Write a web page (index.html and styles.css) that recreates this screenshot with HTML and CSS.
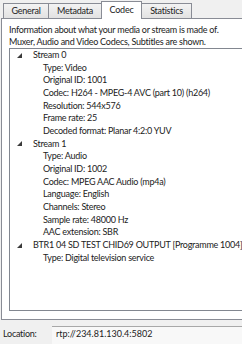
FILE: index.html
```html
<!DOCTYPE html>
<html lang="en">
<head>
    <meta charset="UTF-8">
    <title>Media Information - Codec</title>
    <link rel="stylesheet" href="styles.css">
</head>
<body>
    <div class="tabs">
        <div class="tab tab-general">General</div>
        <div class="tab tab-metadata">Metadata</div>
        <div class="tab tab-codec active">Codec</div>
        <div class="tab tab-stats">Statistics</div>
    </div>

    <div class="panel">
        <p class="intro">Information about what your media or stream is made of.<br>Muxer, Audio and Video Codecs, Subtitles are shown.</p>

        <div class="tree">
            <div class="node">
                <svg class="arrow" width="5" height="5" viewBox="0 0 5 5"><polygon points="5,0 5,5 0,5"/></svg>
                <span>Stream 0</span>
            </div>
            <div class="leaf">Type: Video</div>
            <div class="leaf">Original ID: 1001</div>
            <div class="leaf">Codec: H264 - MPEG-4 AVC (part 10) (h264)</div>
            <div class="leaf">Resolution: 544x576</div>
            <div class="leaf">Frame rate: 25</div>
            <div class="leaf">Decoded format: Planar 4:2:0 YUV</div>

            <div class="node">
                <svg class="arrow" width="5" height="5" viewBox="0 0 5 5"><polygon points="5,0 5,5 0,5"/></svg>
                <span>Stream 1</span>
            </div>
            <div class="leaf">Type: Audio</div>
            <div class="leaf">Original ID: 1002</div>
            <div class="leaf">Codec: MPEG AAC Audio (mp4a)</div>
            <div class="leaf">Language: English</div>
            <div class="leaf">Channels: Stereo</div>
            <div class="leaf">Sample rate: 48000 Hz</div>
            <div class="leaf">AAC extension: SBR</div>

            <div class="node">
                <svg class="arrow" width="5" height="5" viewBox="0 0 5 5"><polygon points="5,0 5,5 0,5"/></svg>
                <span>BTR1 04 SD TEST CHID69 OUTPUT [Programme 1004]</span>
            </div>
            <div class="leaf">Type: Digital television service</div>
        </div>
    </div>

    <div class="location">
        <label for="location">Location:</label>
        <input type="text" id="location" value="rtp://234.81.130.4:5802" readonly>
    </div>
</body>
</html>
```

FILE: styles.css
```css
body {
    margin: 0;
    width: 242px;
    height: 344px;
    overflow: hidden;
    background: #f0f0f0;
    font-family: Lato, "Open Sans", sans-serif;
    font-size: 9px;
    letter-spacing: -0.25px;
    color: #222;
}

.tabs {
    display: flex;
    align-items: flex-end;
    height: 18px;
    padding-left: 3px;
}

.tab {
    box-sizing: border-box;
    height: 15px;
    margin-right: -1px;
    border: 1px solid #898c95;
    border-bottom: none;
    background: linear-gradient(#f3f3f3, #e2e2e2);
    line-height: 14px;
    text-align: center;
    white-space: nowrap;
}

.tab-general { width: 46px; }
.tab-metadata { width: 54px; }
.tab-codec { width: 41px; }
.tab-stats { width: 51px; }

.tab.active {
    position: relative;
    height: 18px;
    margin-bottom: -1px;
    background: #fff;
    line-height: 16px;
}

.panel {
    box-sizing: border-box;
    width: 320px;
    height: 302px;
    margin-left: 1px;
    padding: 5px 0 8px 7px;
    border: 1px solid #898c95;
    background: #fff;
}

.intro {
    margin: 0;
    line-height: 12px;
}

.tree {
    box-sizing: border-box;
    height: 263px;
    border: 1px solid #828790;
}

.node,
.leaf {
    height: 12.67px;
    line-height: 12.67px;
    white-space: nowrap;
}

.node {
    display: flex;
    align-items: center;
    padding-left: 7px;
}

.arrow {
    fill: #3a3a3a;
    margin-right: 11px;
}

.leaf {
    padding-left: 33px;
}

.location {
    display: flex;
    align-items: flex-start;
    padding-top: 6px;
}

.location label {
    width: 49px;
    padding: 1px 0 0 3px;
    line-height: 13px;
}

.location input {
    box-sizing: border-box;
    flex: 1;
    height: 24px;
    margin: 0;
    padding: 0 0 10px 4px;
    border: none;
    border-top: 1px solid #a8a8a8;
    background: #f8f8f8;
    font: inherit;
    color: #222;
}
```
